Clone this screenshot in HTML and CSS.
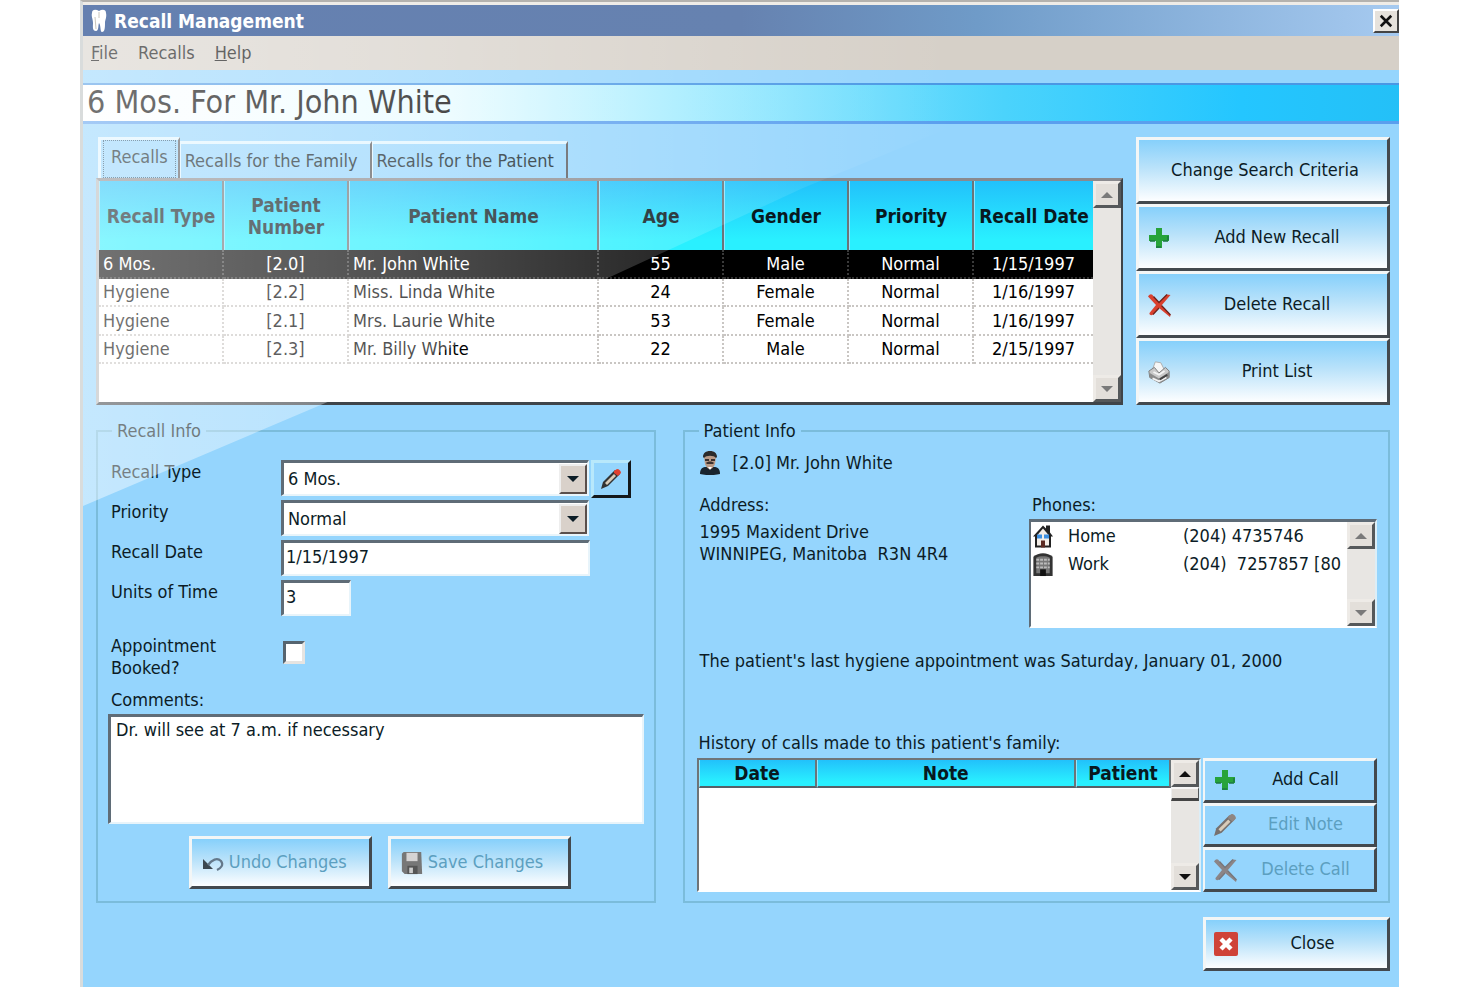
FILE: index.html
```html
<!DOCTYPE html>
<html lang="en">
<head>
<meta charset="utf-8">
<title>Recall Management</title>
<link rel="stylesheet" href="styles.css">
</head>
<body>
<svg class="defs" aria-hidden="true">
  <symbol id="up" viewBox="0 0 16 16"><path d="M2 11 8 5l6 6z" fill="currentColor"/></symbol>
  <symbol id="down" viewBox="0 0 16 16"><path d="M2 5h12l-6 6z" fill="currentColor"/></symbol>
  <symbol id="plus" viewBox="0 0 24 24"><path d="M9 2h6v7h7v6h-7v7H9v-7H2V9h7z" fill="#27a33a"/><path d="M21 10v4M16 15h5M9 21h5M3 15h5" fill="none" stroke="#1c7a44" stroke-width="1.500"/></symbol>
  <symbol id="cross" viewBox="0 0 24 24"><path d="M1 3.500C3 .5 5 .5 6.500 3.500L12 9.500 20 1.500l3.500.5L14.500 12.500 23.500 22l-.5 2L12 15 6 21.500c-1.500 1.500-4 .5-3.500-1.500L9 12z" fill="var(--mark)"/><path d="m6.500 3.500 5.500 6 8-8M14.500 12.500l9 9.500M12 15l-6 6.500" fill="none" stroke="var(--mark-edge)" stroke-width="1.300"/></symbol>
  <symbol id="pencil" viewBox="0 0 22 22"><path d="m1 21 2-7L15 2l5 4L8 18z" fill="var(--lead)"/><path d="m5 15 9-9 2 2-9 9z" fill="#d8cbb8"/><path d="m14 3 3-2c2 0 4 2 4 4l-3 3-4-3z" fill="var(--tip)"/></symbol>
</svg>
<main class="window">
  <header class="titlebar">
    <svg class="tooth" viewBox="0 0 18 24" aria-hidden="true"><path d="M2 4c0-4 4-4 7-2 3-2 7-2 7 2 1 4-1 7-1 10 0 4 0 9-3 9-2 0-1-7-3-9-1 2 0 8-3 8-4 0-3-5-3-8C3 10 1 7 2 4z" fill="#fff"/><path d="M9 3v6M5 8l1 12" stroke="#c9c6bc" fill="none"/></svg>
    <h1>Recall Management</h1>
    <button class="shut" aria-label="Close window"><svg viewBox="0 0 16 16"><path d="m2 2 12 12M14 2 2 14" stroke="#111" stroke-width="3"/></svg></button>
  </header>
  <nav class="menu"><a href="#file"><u>F</u>ile</a><a href="#recalls">Recalls</a><a href="#help"><u>H</u>elp</a></nav>
  <h2 class="banner">6 Mos. For Mr. John White</h2>

  <div class="body">
    <section class="top">
      <div class="listing">
        <div class="tabs" role="tablist">
          <button class="tab active" role="tab" aria-selected="true"><span>Recalls</span></button>
          <button class="tab" role="tab">Recalls for the Family</button>
          <button class="tab" role="tab">Recalls for the Patient</button>
        </div>
        <div class="grid">
          <table class="recalls">
            <colgroup><col class="c125"><col class="c125"><col class="c250"><col class="c125"><col class="c125"><col class="c125"><col class="c120"></colgroup>
            <thead><tr><th>Recall Type</th><th>Patient Number</th><th>Patient Name</th><th>Age</th><th>Gender</th><th>Priority</th><th>Recall Date</th></tr></thead>
            <tbody>
              <tr class="selected"><td>6 Mos.</td><td>[2.0]</td><td>Mr. John White</td><td>55</td><td>Male</td><td>Normal</td><td>1/15/1997</td></tr>
              <tr><td>Hygiene</td><td>[2.2]</td><td>Miss. Linda White</td><td>24</td><td>Female</td><td>Normal</td><td>1/16/1997</td></tr>
              <tr><td>Hygiene</td><td>[2.1]</td><td>Mrs. Laurie White</td><td>53</td><td>Female</td><td>Normal</td><td>1/16/1997</td></tr>
              <tr><td>Hygiene</td><td>[2.3]</td><td>Mr. Billy White</td><td>22</td><td>Male</td><td>Normal</td><td>2/15/1997</td></tr>
            </tbody>
          </table>
          <div class="scroll idle"><button aria-label="Scroll up"><svg><use href="#up"/></svg></button><button aria-label="Scroll down"><svg><use href="#down"/></svg></button></div>
        </div>
      </div>
      <div class="actions">
        <button class="btn"><span>Change Search Criteria</span></button>
        <button class="btn"><svg class="ico"><use href="#plus"/></svg><span class="after">Add New Recall</span></button>
        <button class="btn"><svg class="ico"><use href="#cross"/></svg><span class="after">Delete Recall</span></button>
        <button class="btn"><svg class="ico" viewBox="0 0 24 26"><path d="m5 10 3-8 6 1 4 8-7 4z" fill="#f6f6f6" stroke="#aaa"/><path d="m1 12 6-4 5 6 7-6 4 4v7l-10 6-11-6z" fill="#c9c9c9" stroke="#777"/><path d="m2 14 10 6 11-7v6l-10 6-11-6z" fill="#8b8b8b"/><path d="m6 13 6 3 6-4M5 20l7 3 8-4" fill="none" stroke="#f4f4f4" stroke-width="2"/><path d="m13 21 8-5" stroke="#444" stroke-width="2"/></svg><span class="after">Print List</span></button>
      </div>
    </section>

    <section class="panels">
      <fieldset class="group recall">
        <legend>Recall Info</legend>
        <div class="form">
          <label for="type">Recall Type</label>
          <div class="line"><div class="pick"><select id="type"><option>6 Mos.</option></select><span class="drop"><svg><use href="#down"/></svg></span></div><button class="edit" aria-label="Edit recall types"><svg><use href="#pencil"/></svg></button></div>
          <label for="prio">Priority</label>
          <div class="line"><div class="pick"><select id="prio"><option>Normal</option></select><span class="drop"><svg><use href="#down"/></svg></span></div></div>
          <label for="date">Recall Date</label>
          <input class="field date" id="date" type="text" value="1/15/1997">
          <label for="units">Units of Time</label>
          <input class="field units" id="units" type="text" value="3">
          <label class="booked" for="booked">Appointment Booked?</label>
          <input class="check" id="booked" type="checkbox">
        </div>
        <label class="caption" for="notes">Comments:</label>
        <textarea id="notes" class="notes">Dr. will see at 7 a.m. if necessary</textarea>
        <div class="commit">
          <button class="btn small" disabled><svg class="ico undo" viewBox="0 0 22 16"><path d="M1 4v10h10L7.500 10.500 5 8z" fill="#3c4850"/><path d="M6 10c4-5 9-8 13-4 3 4 0 7-4 9" fill="none" stroke="#64788a" stroke-width="2.200"/></svg><span>Undo Changes</span></button>
          <button class="btn small" disabled><svg class="ico save" viewBox="0 0 24 26"><path d="M3 1h19l1 24H4l-3-3V3z" fill="#777"/><path d="M6 2h12v9H6z" fill="#d5d3d3"/><path d="M7 16h11v9H7z" fill="#555"/><path d="M9 18h4v6H9z" fill="#ccc"/></svg><span>Save Changes</span></button>
        </div>
      </fieldset>

      <fieldset class="group patient">
        <legend>Patient Info</legend>
        <p class="who"><svg class="man" viewBox="0 0 20 24" aria-hidden="true"><path d="M0 23c0-6 3-7 6-7h8c3 0 6 1 6 7-5 1.500-15 1.500-20 0z" fill="#19242e"/><path d="M4 6c0-4 3-6 6-6s6 2 6 6l-1 7c-1 3-3 5-5 5s-4-2-5-5z" fill="#b99a86"/><path d="M3 6c0-4 3-6 7-6s7 2 7 6l-1 1c-2-3-10-3-12 0z" fill="#2b2b2b"/><path d="M5 8h4v2H5zm6 0h4v2h-4zM6 12c2-2 6-2 8 0l-1 1H7z" fill="#3b3230"/><path d="m8 16 2 3 2-3z" fill="#fff"/></svg><span>[2.0] Mr. John White</span></p>
        <div class="contact">
          <div class="address"><p class="lead">Address:</p><p>1995 Maxident Drive<br>WINNIPEG, Manitoba&nbsp; R3N 4R4</p></div>
          <div class="phones">
            <p class="lead">Phones:</p>
            <div class="phonebox">
              <ul>
                <li><svg viewBox="0 0 22 24" aria-hidden="true"><path d="m1 12 10-11 3 3V1h4v7l3 4h-2v11H3V12z" fill="#222"/><path d="m11 4 6 7v10H5V11z" fill="#f3eee8"/><path d="M5 10h5v4H5zm7 0h5v4h-5z" fill="#3c8fe0"/><path d="M9 16h4v7H9z" fill="#5b2a22"/></svg><span>Home</span><span class="num">(204) 4735746</span></li>
                <li><svg viewBox="0 0 22 26" aria-hidden="true"><path d="M1 5c5-5 15-5 20 0v20H1z" fill="#333"/><path d="M4 6c4-2 10-2 14 0v16H4z" fill="#777"/><path d="M4 8h14M4 12h14M4 16h14" stroke="#bbb" stroke-dasharray="3 1" stroke-width="2"/><path d="M8 18h6v7H8z" fill="#111"/></svg><span>Work</span><span class="num">(204)&nbsp; 7257857 [80</span></li>
              </ul>
              <div class="scroll idle"><button aria-label="Scroll phones up"><svg><use href="#up"/></svg></button><button aria-label="Scroll phones down"><svg><use href="#down"/></svg></button></div>
            </div>
          </div>
        </div>
        <p class="last">The patient's last hygiene appointment was Saturday, January 01, 2000</p>
        <p class="lead history-title">History of calls made to this patient's family:</p>
        <div class="history">
          <div class="calls">
            <table><colgroup><col class="c118"><col><col class="c95"></colgroup><thead><tr><th>Date</th><th>Note</th><th>Patient</th></tr></thead></table>
            <div class="scroll"><button aria-label="Scroll calls up"><svg><use href="#up"/></svg></button><i class="thumb"></i><button aria-label="Scroll calls down"><svg><use href="#down"/></svg></button></div>
          </div>
          <div class="callbtns">
            <button class="btn flat"><svg class="ico"><use href="#plus"/></svg><span class="after">Add Call</span></button>
            <button class="btn flat" disabled><svg class="ico"><use href="#pencil"/></svg><span class="after">Edit Note</span></button>
            <button class="btn flat" disabled><svg class="ico"><use href="#cross"/></svg><span class="after">Delete Call</span></button>
          </div>
        </div>
      </fieldset>
    </section>

    <footer class="foot"><button class="btn close"><svg class="ico" viewBox="0 0 24 24"><rect width="24" height="24" rx="2" fill="#cf4338"/><path d="m7 7 10 10M17 7 7 17" stroke="#fff" stroke-width="4.500"/></svg><span class="after">Close</span></button></footer>
  </div>
  <div class="gloss"></div>
</main>
</body>
</html>
```
FILE: styles.css
```css
* { box-sizing: border-box; }
body, h1, h2, p, ul, fieldset { margin: 0; padding: 0; }
body { background: #fff; color: #0c1c26; font: 18px/22px "DejaVu Sans Condensed", "DejaVu Sans", sans-serif; font-stretch: condensed; }
button, input, select, textarea { font: inherit; color: inherit; border-radius: 0; margin: 0; }
button { padding: 0; }
svg { display: block; }
.defs { position: absolute; width: 0; height: 0; }

.window { position: relative; min-height: 100vh; margin: 0 81px 0 80px; background: #95d5fd; border-top: 2px solid #b4b2ae; border-left: 3px solid #d9dcdc; border-bottom: 1px solid #b9bdc0; --mark: #d9402f; --mark-edge: #6d211b; --tip: #e0402f; --lead: #333; }

.titlebar { display: flex; align-items: center; height: 34px; padding-left: 7px; border-top: 3px solid #efece7; background: linear-gradient(90deg, #6580b0 0, #6682b0 50%, #6f9bc8 68%, #a6caf0 100%); }
.tooth { width: 18px; height: 24px; }
.titlebar h1 { flex: 1; margin-left: 6px; color: #fff; font-size: 19px; }
.shut { width: 26px; height: 24px; background: #e6e2dc; border: 2px solid; border-color: #fff #444 #444 #fff; }
.shut svg { width: 14px; height: 14px; margin: auto; }
.menu { display: flex; align-items: center; gap: 20px; height: 34px; padding-left: 8px; background: #d6d0c8; }
.menu a { color: #000; text-decoration: none; }
.banner { display: flex; align-items: center; height: 41px; margin-top: 13px; padding: 0 4px 2px; border: solid #4a97e4; border-width: 2px 0 3px; border-bottom-color: #5a9fee; background: linear-gradient(90deg, #fff 0, #e6fbff 28%, #a4ecff 45%, #4bd3fc 70%, #24c6ff 88%, #24c0f7 100%); color: #000; font-size: 32px; font-weight: 400; }

.body { padding: 13px 9px 16px 13px; }
.top { display: flex; gap: 13px; }
.listing { flex: 1; min-width: 0; }
.tabs { display: flex; align-items: flex-end; height: 41px; padding-left: 2px; }
.tab { height: 37px; padding: 0 12px 0 4px; background: none; border: solid; border-width: 3px 2px 0 1px; border-color: #dff5ff #55565a #fff #dff5ff; white-space: nowrap; }
.tab.active { height: 41px; padding: 0 2px; border-left-width: 3px; }
.tab.active span { display: block; height: 38px; padding: 5px 7px; border: 1px dotted #2f5570; }
.grid { display: flex; height: 227px; background: #fff; border: solid; border-width: 3px; border-color: #8a8a8e #3f4449 #3f4449 #b5b9bb; }
table { border-collapse: separate; border-spacing: 0; table-layout: fixed; }
.recalls { flex: 1; align-self: flex-start; width: 100%; }
.c125 { width: 125px; } .c250 { width: 250px; } .c120 { width: 119px; } .c118 { width: 118px; } .c95 { width: 95px; }
th { padding: 0; background: linear-gradient(#22c1fb, #29f0ff 85%); border-right: 2px solid #6c7478; border-left: 1px solid #8fe6ff; color: #08191f; font-size: 19px; }
.recalls th { height: 69px; padding: 0 4px; }
.recalls th:last-child { padding: 0; border-right: 0; }
td { height: 28px; padding: 0; text-align: center; border-right: 2px dotted #c9c6c3; border-bottom: 2px dotted #c9c6c3; white-space: nowrap; color: #000; }
tr:nth-child(odd) td { height: 29px; }
td:nth-child(1), td:nth-child(3) { padding-left: 4px; text-align: left; }
td:last-child { border-right: 0; }
.selected td { background: #000; color: #fff; border-right-color: #3a3a3a; border-bottom-color: #333; }

.scroll { display: flex; flex-direction: column; flex: none; width: 28px; background: #e8e6e3; color: #111; }
.scroll button { display: grid; place-items: center; width: 28px; height: 27px; background: #e3dfda; border: 3px solid; border-color: #eeebe7 #55585a #55585a #eeebe7; color: inherit; }
.scroll button:last-child { margin-top: auto; }
.scroll svg { width: 16px; height: 16px; }
.scroll.idle { color: #7a7a7a; }
.thumb { height: 14px; background: #e3dfda; border: solid; border-width: 2px 1px 3px 1px; border-color: #f5f5f5 #55585a #444 #eee; }

.btn { display: flex; align-items: center; padding: 0 8px; background: linear-gradient(#86d0fb, #b9e2fa 45%, #fdfeff); border: 3px solid; border-color: #f3f6f6 #43494e #43494e #f3f6f6; white-space: nowrap; }
.btn span { flex: 1; padding-bottom: 2px; text-align: center; }
.ico { flex: none; width: 24px; height: 24px; }
.actions { display: flex; flex-direction: column; width: 254px; }
.actions .btn { flex: 1; padding-right: 4px; }

.panels { display: flex; gap: 27px; margin-top: 15px; }
.group { min-width: 0; border: 2px solid #7bbcdb; padding: 0 10px 9px; }
.recall { flex: 536 1 0; }
.patient { flex: 684 1 0; }
legend { margin-left: 4px; padding: 0 5px; }
.form { display: grid; grid-template-columns: 170px 1fr; row-gap: 4px; margin-top: 18px; padding-left: 3px; line-height: 24px; }
.form > label { white-space: nowrap; }
.line { display: flex; height: 36px; gap: 2px; }
.pick { position: relative; width: 308px; }
select, .field, .notes { background: #fff; border: solid; border-width: 3px 2px 2px 3px; border-color: #5f6c77 #e8f4fa #e8f4fa #5f6c77; outline: 0; }
select { width: 100%; height: 100%; padding: 0 30px 0 4px; appearance: none; }
.drop { position: absolute; top: 4px; right: 2px; display: grid; place-items: center; width: 28px; height: 30px; background: #d9d1ca; border: 2px solid; border-color: #eee #5a4f4c #5a4f4c #eee; pointer-events: none; }
.drop svg { width: 16px; height: 16px; }
.edit { display: grid; place-items: center; width: 40px; height: 38px; background: #95d5fd; border: 3px solid; border-color: #b8e8fb #14181b #14181b #b8e8fb; }
.edit svg { width: 22px; height: 22px; }
.field { height: 36px; padding: 0 2px 4px; }
.date { width: 309px; }
.units { width: 70px; }
.form .booked { width: 120px; margin-top: 15px; line-height: 22px; white-space: normal; }
.check { appearance: none; width: 22px; height: 23px; margin: 21px 0 0 2px; background: #fff; border: solid; border-width: 3px; border-color: #56646f #e6e4e1 #e6e4e1 #56646f; }
.caption { display: block; margin-top: 10px; padding-left: 3px; }
.notes { display: block; width: 100%; height: 110px; margin-top: 3px; padding: 2px 5px; resize: none; line-height: 22px; }
.commit { display: flex; justify-content: center; gap: 16px; margin-top: 12px; padding-left: 8px; }
.small { width: 183px; height: 53px; padding: 0 0 0 9px; gap: 4px; }
.small span { text-align: left; }
.btn:disabled { color: #5c9fc0; --mark: #8b8587; --mark-edge: #77767a; --tip: #8f8681; --lead: #77716e; }
.undo { height: 16px; }

.who { display: flex; align-items: center; gap: 13px; margin: 9px 0 0 5px; }
.who svg { width: 20px; height: 24px; }
.contact { display: flex; justify-content: space-between; margin-top: 19px; padding-left: 5px; }
.lead { margin-bottom: 5px; }
.phones { width: 348px; margin-right: 1px; }
.phones .lead { margin: 0 0 3px 3px; }
.phonebox { display: flex; height: 109px; background: #fff; border: solid; border-width: 3px 2px 2px; border-color: #5f6c77 #dceef7 #fff #5f6c77; }
.phonebox ul { flex: 1; min-width: 0; list-style: none; }
.phonebox li { display: grid; grid-template-columns: 22px 101px 1fr; column-gap: 14px; align-items: center; height: 28px; padding-left: 1px; white-space: nowrap; overflow: hidden; }
.phonebox li svg { width: 22px; height: 25px; }
.last { margin: 22px 0 0 5px; }
.history-title { margin: 60px 0 4px 4px; }
.history { display: flex; gap: 2px; padding: 0 1px 0 2px; }
.calls { display: flex; flex: 1; height: 134px; background: #fff; border: 2px solid; border-color: #6f7478 #dceef7 #fff #6f7478; }
.calls table { flex: 1; align-self: flex-start; width: 100%; }
.calls th { height: 28px; border-bottom: 2px solid #566067; }
.callbtns { display: flex; flex-direction: column; width: 174px; }
.flat { flex: 1; padding-right: 0; background: #95d5fd; border-width: 3px 3px 3px 2px; }
.foot { display: flex; justify-content: flex-end; margin-top: 14px; }
.close { width: 187px; height: 54px; padding-right: 0; }

.gloss { position: absolute; top: 34px; left: 0; width: 1090px; height: 472px; background: linear-gradient(90deg, rgba(255,255,255,.45) 0, rgba(255,255,255,.32) 28%, rgba(255,255,255,.18) 50%, rgba(255,255,255,0) 80%); clip-path: polygon(0 0, 100% 0, 720px 152px, 527px 241px, 240px 368px, 0 470px); pointer-events: none; }
```
